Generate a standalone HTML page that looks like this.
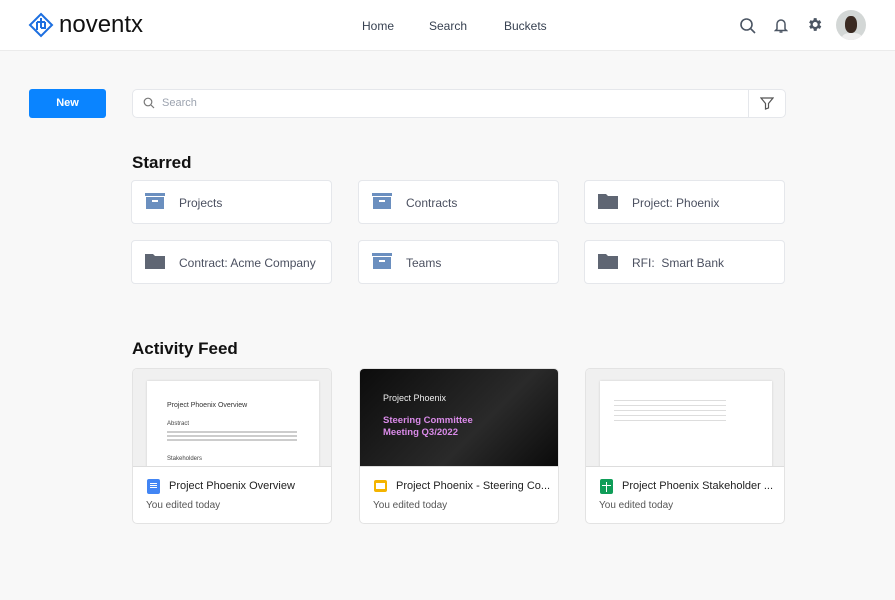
<!DOCTYPE html><html><head><style>
*{box-sizing:border-box;margin:0;padding:0}
body{width:895px;height:600px;background:#f8f8f8;font-family:"Liberation Sans",sans-serif;position:relative;overflow:hidden;color:#111}
.hdr{position:absolute;left:0;top:0;width:895px;height:51px;background:#fff;border-bottom:1px solid #ebebeb}
.abs{position:absolute}
.nav{font-size:12px;color:#374151;top:19px}
.card{position:absolute;background:#fff;border:1px solid #e5e7eb;border-radius:4px;width:201px;height:44px}
.card span{position:absolute;left:47px;top:15px;font-size:12px;color:#4b5060}
.card svg{position:absolute;left:13px;top:12px}
.act{position:absolute;background:#fff;border:1px solid #e3e3e3;border-radius:5px;width:200px;height:156px;top:368px;overflow:hidden}
.prev{position:absolute;left:0;top:0;width:200px;height:98px;background:#f0f0f0;border-bottom:1px solid #ddd;overflow:hidden}
.page{position:absolute;left:14px;top:12px;width:172px;height:90px;background:#fff;box-shadow:0 0 2px #ccc}
.t1{position:absolute;left:36px;top:111px;font-size:11px;color:#222;white-space:nowrap}
.t2{position:absolute;top:131px;left:13px;font-size:10px;color:#555}
.ic{position:absolute;left:14px;top:110px;width:13px;height:15px;border-radius:2px}
h2{position:absolute;font-size:17px;color:#111;font-weight:bold}
</style></head><body>
<div class="hdr">
<svg class="abs" style="left:28px;top:12px" width="26" height="26" viewBox="0 0 26 26" fill="none" stroke="#1d6fe0" stroke-width="2"><path d="M13 2L24 13L13 24L2 13Z"/><path d="M9 10h8M9 10v8M13 6v10M17 10v6h-4"/></svg>
<div class="abs" style="left:59px;top:11px;font-size:24px;color:#111">noventx</div>
<div class="abs nav" style="left:362px">Home</div>
<div class="abs nav" style="left:429px">Search</div>
<div class="abs nav" style="left:504px">Buckets</div>
<svg class="abs" style="left:739px;top:17px" width="18" height="18" viewBox="0 0 18 18" fill="none" stroke="#4b5563" stroke-width="1.6"><circle cx="7.5" cy="7.5" r="5.5"/><path d="M11.5 11.5L16 16"/></svg>
<svg class="abs" style="left:774px;top:17px" width="14" height="17" viewBox="0 0 14 17" fill="none" stroke="#4b5563" stroke-width="1.5"><path d="M3 12V7a4 4 0 018 0v5l1.5 1.5h-11z"/><path d="M5.5 15h3"/></svg>
<svg class="abs" style="left:806px;top:16px" width="17" height="17" viewBox="0 0 24 24" fill="#4b5563"><path d="M19.4 13a7.5 7.5 0 000-2l2.1-1.6-2-3.5-2.5 1a7 7 0 00-1.7-1L15 3h-4l-.4 2.9a7 7 0 00-1.7 1l-2.5-1-2 3.5L6.6 11a7.5 7.5 0 000 2l-2.1 1.6 2 3.5 2.5-1a7 7 0 001.7 1L11 21h4l.4-2.9a7 7 0 001.7-1l2.5 1 2-3.5zM13 15.5A3.5 3.5 0 1113 8.5a3.5 3.5 0 010 7z"/></svg>
<div class="abs" style="left:836px;top:10px;width:30px;height:30px;border-radius:50%;background:#d3d7d6;overflow:hidden"><div style="position:absolute;left:9px;top:6px;width:12px;height:17px;border-radius:45%;background:#3a2a22"></div><div style="position:absolute;left:6px;top:23px;width:20px;height:12px;border-radius:40%;background:#eee"></div></div>
</div>
<div class="abs" style="left:29px;top:89px;width:77px;height:29px;background:#0a84ff;border-radius:3px;color:#fff;font-weight:bold;font-size:11px;text-align:center;line-height:29px">New</div>
<div class="abs" style="left:132px;top:89px;width:654px;height:29px;background:#fff;border:1px solid #e5e7eb;border-radius:5px"></div>
<div class="abs" style="left:748px;top:89px;width:1px;height:29px;background:#e5e7eb"></div>
<svg class="abs" style="left:143px;top:97px" width="12" height="12" viewBox="0 0 12 12" fill="none" stroke="#777" stroke-width="1.2"><circle cx="5" cy="5" r="3.8"/><path d="M8 8l3 3"/></svg>
<div class="abs" style="left:162px;top:97px;font-size:11px;color:#9ca3af">Search</div>
<svg class="abs" style="left:760px;top:96px" width="14" height="14" viewBox="0 0 14 14" fill="none" stroke="#555" stroke-width="1.2"><path d="M1 2h12L8.5 7.5V12L5.5 13V7.5Z"/></svg>
<h2 style="left:132px;top:153px">Starred</h2>
<h2 style="left:132px;top:339px">Activity Feed</h2>
<div class="card" style="left:131px;top:180px"><svg width="20" height="16"><rect x="0" y="0" width="20" height="3" fill="#6b8fbf"/><rect x="1" y="4" width="18" height="12" fill="#6b8fbf"/><rect x="7" y="7" width="6" height="2" fill="#fff"/></svg><span>Projects</span></div>
<div class="card" style="left:358px;top:180px"><svg width="20" height="16"><rect x="0" y="0" width="20" height="3" fill="#6b8fbf"/><rect x="1" y="4" width="18" height="12" fill="#6b8fbf"/><rect x="7" y="7" width="6" height="2" fill="#fff"/></svg><span>Contracts</span></div>
<div class="card" style="left:584px;top:180px"><svg width="20" height="16"><path d="M0 1h8l2 2h10v13H0z" fill="#5f6673"/></svg><span>Project: Phoenix</span></div>
<div class="card" style="left:131px;top:240px"><svg width="20" height="16"><path d="M0 1h8l2 2h10v13H0z" fill="#5f6673"/></svg><span>Contract: Acme Company</span></div>
<div class="card" style="left:358px;top:240px"><svg width="20" height="16"><rect x="0" y="0" width="20" height="3" fill="#6b8fbf"/><rect x="1" y="4" width="18" height="12" fill="#6b8fbf"/><rect x="7" y="7" width="6" height="2" fill="#fff"/></svg><span>Teams</span></div>
<div class="card" style="left:584px;top:240px"><svg width="20" height="16"><path d="M0 1h8l2 2h10v13H0z" fill="#5f6673"/></svg><span>RFI:&nbsp; Smart Bank</span></div>
<div class="act" style="left:132px"><div class="prev"><div class="page">
<div class="abs" style="left:20px;top:21px;font-size:7px;color:#333">Project Phoenix Overview</div>
<div class="abs" style="left:20px;top:40px;font-size:6px;color:#444">Abstract</div>
<div class="abs" style="left:20px;top:50px;width:130px;height:2px;background:#ccc;box-shadow:0 4px #ccc,0 8px #ccc"></div>
<div class="abs" style="left:20px;top:75px;font-size:6px;color:#444">Stakeholders</div></div></div>
<div class="ic" style="background:#4285f4"><div style="margin:4px 3px;width:7px;height:1px;background:#fff;box-shadow:0 2px #fff,0 4px #fff"></div></div>
<div class="t1">Project Phoenix Overview</div>
<div class="t2">You edited today</div></div>
<div class="act" style="left:359px"><div class="prev" style="background:linear-gradient(135deg,#0c0c0c,#2a2a2a 60%,#0a0a0a)">
<div class="abs" style="left:23px;top:24px;font-size:9px;color:#eee">Project Phoenix</div>
<div class="abs" style="left:23px;top:46px;font-size:9.5px;color:#d98ae8;font-weight:bold;line-height:12px">Steering Committee<br>Meeting Q3/2022</div></div>
<div class="ic" style="background:#f4b400;width:13px;height:12px;top:111px"><div style="margin:3px 2px;width:9px;height:6px;background:#fff"></div></div>
<div class="t1">Project Phoenix - Steering Co...</div>
<div class="t2">You edited today</div></div>
<div class="act" style="left:585px"><div class="prev"><div class="page">
<div class="abs" style="left:14px;top:15px;width:112px;height:25px;background:repeating-linear-gradient(#fff 0,#fff 4px,#ddd 4px,#ddd 5px)"></div></div></div>
<div class="ic" style="background:#0f9d58"><div style="position:absolute;left:6px;top:3px;width:1px;height:10px;background:#fff"></div><div style="position:absolute;left:2px;top:6px;width:9px;height:1px;background:#fff"></div></div>
<div class="t1">Project Phoenix Stakeholder ...</div>
<div class="t2">You edited today</div></div>
</body></html>
